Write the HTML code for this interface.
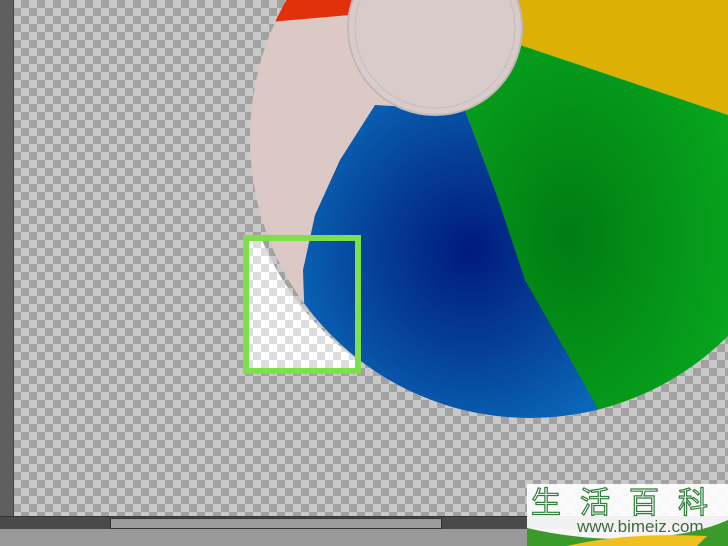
<!DOCTYPE html>
<html><head><meta charset="utf-8"><style>
html,body{margin:0;padding:0;width:728px;height:546px;overflow:hidden;background:#9a9a9a}
.chk{position:absolute;left:13px;top:0;width:715px;height:517px;
background-color:#c9c9c9;
background-image:linear-gradient(45deg,#a2a2a2 25%,transparent 25%,transparent 75%,#a2a2a2 75%),linear-gradient(45deg,#a2a2a2 25%,transparent 25%,transparent 75%,#a2a2a2 75%);
background-size:16px 16px;background-position:0 0,8px 8px}
.lb{position:absolute;left:0;top:0;width:13px;height:517px;background:#5f5f5f;border-right:1px solid #444}
.sb{position:absolute;left:0;top:516px;width:728px;height:12px;background:#4a4a4a;border-top:1px solid #333}
.th{position:absolute;left:110px;top:518px;width:330px;height:9px;background:#9c9c9c;border:1px solid #333}
.bot{position:absolute;left:0;top:529px;width:728px;height:17px;background:#999}
.wm{position:absolute;left:527px;top:484px;width:201px;height:62px;background:rgba(255,255,255,.92);overflow:hidden}
.cn{position:absolute;left:4px;top:0;font:30px "Noto Sans CJK SC",sans-serif;color:#fff;-webkit-text-stroke:1.2px #2e7d3a;letter-spacing:19px;line-height:32px}
.url{position:absolute;left:50px;top:33px;font:17px "Liberation Sans",sans-serif;color:#3d6b3d}
</style></head><body>
<div class="chk"></div>
<svg style="position:absolute;left:0;top:0" width="728" height="546">
<defs>
<clipPath id="b"><circle cx="530" cy="138" r="280"/></clipPath>
<radialGradient id="bl" cx="0.55" cy="0.45" r="0.6"><stop offset="0" stop-color="#001a80"/><stop offset="0.5" stop-color="#053f95"/><stop offset="1" stop-color="#0a66b8"/></radialGradient>
<radialGradient id="gr" cx="0.4" cy="0.5" r="0.7"><stop offset="0" stop-color="#007c12"/><stop offset="1" stop-color="#08a81e"/></radialGradient>
<pattern id="lc" width="16" height="16" patternUnits="userSpaceOnUse" x="13"><rect width="16" height="16" fill="#fff"/><rect width="8" height="8" fill="#ddd"/><rect x="8" y="8" width="8" height="8" fill="#ddd"/></pattern>
</defs>
<g clip-path="url(#b)">
<rect x="240" y="-150" width="500" height="580" fill="#dcc9c6"/>
<polygon points="270,0 355,0 350,15 270,22" fill="#e0300c"/>
<polygon points="500,0 728,0 728,115 520,45" fill="#dcb005"/>
<path d="M520,45 L728,115 L728,430 L600,430 L560,350 L520,270 L495,190 L465,110 Z" fill="url(#gr)"/>
<path d="M375,105 L465,110 L495,190 L525,280 L565,350 L610,430 L300,430 L305,330 L303,270 L315,215 L340,160 Z" fill="url(#bl)"/>
<path d="M300,300 Q305,330 325,345 L318,335 Q300,320 300,300Z" fill="#8a1020"/>
</g>
<circle cx="435" cy="28" r="87" fill="#d8cccb" stroke="#c2b8b8" stroke-width="2"/>
<circle cx="435" cy="28" r="80" fill="none" stroke="#ccc0c0" stroke-width="1.5"/>
<rect x="248" y="240" width="110" height="130" fill="url(#lc)" clip-path="url(#out)"/>
<clipPath id="out"><path d="M248,240 L248,370 L358,370 L358,360 A280 280 0 0 1 262,240 Z"/></clipPath>
<rect x="246" y="238" width="112" height="133" fill="none" stroke="#7de04a" stroke-width="6"/>
</svg>
<div class="lb"></div>
<div class="sb"></div>
<div class="th"></div>
<div class="bot"></div>
<div class="wm">
<div class="cn">生活百科</div>
<div class="url">www.bimeiz.com</div>
<svg style="position:absolute;left:0;top:36px" width="201" height="26"><path d="M0,8 Q60,22 120,18 Q170,14 201,0 L201,26 L0,26Z" fill="#3a9a2a"/><path d="M40,26 Q100,12 180,16 L170,26Z" fill="#f0c020"/></svg>
</div>
</body></html>
